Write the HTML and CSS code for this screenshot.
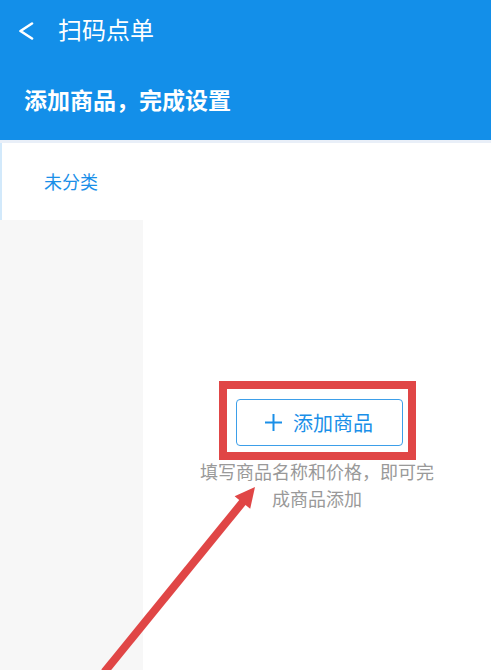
FILE: index.html
```html
<!DOCTYPE html>
<html lang="zh-CN">
<head>
    <meta charset="UTF-8">
    <meta name="viewport" content="width=device-width, initial-scale=1.0">
    <title>扫码点单</title>
    <link rel="stylesheet" href="styles.css">
</head>
<body>
    <header class="topbar">
        <div class="nav">
            <svg class="back" width="16" height="18" viewBox="0 0 16 18">
                <polyline points="14,1.5 2.5,9 14,16.5" fill="none" stroke="#fff" stroke-width="2.6" stroke-linecap="round" stroke-linejoin="round"/>
            </svg>
            <span class="nav-title">扫码点单</span>
        </div>
        <h1 class="page-title">添加商品，完成设置</h1>
    </header>
    <div class="main">
        <aside class="side">
            <div class="side-item active">未分类</div>
        </aside>
        <section class="content">
            <div class="mark">
                <button class="add-btn">
                    <svg width="17" height="17" viewBox="0 0 17 17">
                        <path d="M8.5 0v17M0 8.5h17" stroke="#1a8fe8" stroke-width="2" fill="none"/>
                    </svg>
                    添加商品
                </button>
            </div>
            <p class="hint">填写商品名称和价格，即可完成商品添加</p>
        </section>
    </div>
    <!-- 标注箭头 -->
    <svg class="arrow" width="491" height="670" viewBox="0 0 491 670">
        <line x1="104.4" y1="672" x2="244" y2="500.5" stroke="#e04646" stroke-width="8"/>
        <polygon points="255,487 250.2,508.8 234.6,496.2" fill="#e04646"/>
    </svg>
</body>
</html>
```

FILE: styles.css
```css
body {
    margin: 0;
    font-family: "Noto Sans CJK SC", "Noto Sans", sans-serif;
    background-color: #fff;
    position: relative;
    overflow: hidden;
}
.topbar {
    background-color: #138fe9;
    color: #fff;
    height: 140px;
    border-bottom: 3px solid #e9eff8;
}
.nav {
    display: flex;
    align-items: center;
    height: 56px;
    padding-left: 18px;
}
.back {
    margin-top: 6px;
}
.nav-title {
    margin-left: 24px;
    font-size: 24px;
}
.page-title {
    margin: 0;
    padding: 2px 0 0 24px;
    height: 82px;
    line-height: 82px;
    font-size: 23px;
    font-weight: bold;
}
.main {
    display: flex;
    height: 527px;
}
.side {
    width: 143px;
    background-color: #f7f7f7;
    flex-shrink: 0;
}
.side-item {
    height: 77px;
    line-height: 77px;
    padding-left: 42px;
    font-size: 18px;
    color: #1a8fe8;
}
.side-item.active {
    background-color: #fff;
    border-left: 2px solid #d2e9fb;
}
.content {
    flex: 1;
    display: flex;
    flex-direction: column;
    align-items: center;
    padding-top: 238px;
}
.mark {
    border: 8px solid #e04646;
    padding: 10px 5px 6px 9px;
}
.add-btn {
    display: flex;
    align-items: center;
    justify-content: center;
    gap: 11px;
    width: 167px;
    height: 47px;
    background-color: #fff;
    border: 1px solid #3d9fe9;
    border-radius: 4px;
    color: #1a8fe8;
    font-family: inherit;
    font-size: 20px;
    padding: 0;
}
.hint {
    width: 240px;
    margin: -2px 0 0;
    text-align: center;
    font-size: 18px;
    line-height: 27px;
    color: #999;
}
.arrow {
    position: absolute;
    left: 0;
    top: 0;
    pointer-events: none;
}
```
